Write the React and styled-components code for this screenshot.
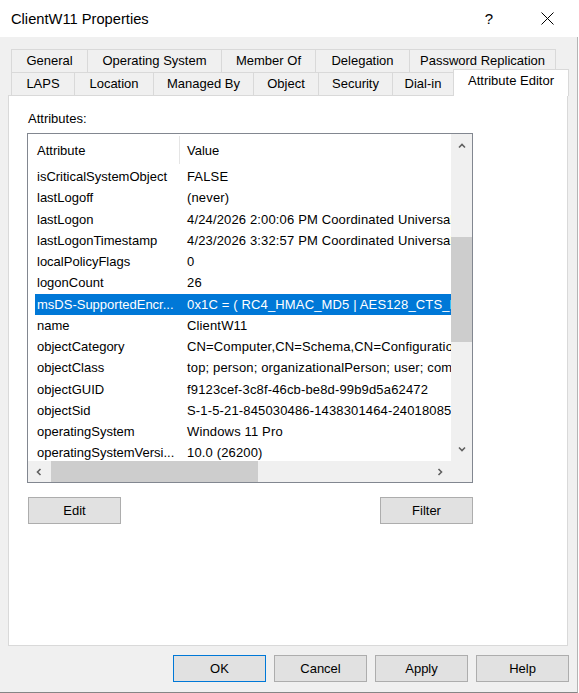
import React from "react";
import styled, { createGlobalStyle } from "styled-components";

const GlobalStyle = createGlobalStyle`
  html, body {
    margin: 0;
    padding: 0;
    background: #fff;
  }
  body {
    font-family: "Liberation Sans", Arial, sans-serif;
    color: #000;
  }
`;

const Window = styled.div`
  width: 579px;
  height: 693px;
  display: flex;
  flex-direction: column;
  background: #fff;
  overflow: hidden;
`;

const TitleBar = styled.div`
  flex: none;
  height: 37px;
  display: flex;
  align-items: center;
  padding-left: 11px;
  padding-right: 9px;
`;

const Title = styled.div`
  flex: 1;
  font-size: 14.7px;
`;

const TitleButton = styled.div`
  width: 46px;
  height: 37px;
  display: flex;
  align-items: center;
  justify-content: center;
  font-size: 15px;
  margin-left: ${(p) => p.$gap || 0}px;
`;

const Body = styled.div`
  flex: 1;
  box-sizing: border-box;
  width: 578px;
  background: #f0f0f0;
  border-right: 1px solid #b4b4b4;
  border-bottom: 1px solid #858585;
  padding: 12px 0 0 8px;
`;

const TabStrip = styled.div`
  padding-left: 3px;
`;

const TabRow = styled.div`
  display: flex;
  height: 23px;
`;

const Tab = styled.div`
  flex: none;
  box-sizing: border-box;
  width: ${(p) => p.$w}px;
  height: ${(p) => (p.$selected ? 27 : 23)}px;
  margin-top: ${(p) => (p.$selected ? -3 : 0)}px;
  margin-left: -1px;
  border: 1px solid #d9d9d9;
  border-bottom: none;
  background: ${(p) => (p.$selected ? "#fff" : "#f0f0f0")};
  font-size: 13px;
  line-height: 22px;
  text-align: center;
  white-space: nowrap;
  z-index: ${(p) => (p.$selected ? 1 : 0)};

  &:first-child {
    margin-left: 0;
  }
`;

const Panel = styled.div`
  box-sizing: border-box;
  width: 560px;
  height: 551px;
  background: #fff;
  border: 1px solid #d9d9d9;
  padding: 15px 0 0 18px;
`;

const Label = styled.div`
  font-size: 13px;
  line-height: 16px;
  padding-left: 1px;
  margin-bottom: 6px;
`;

const ListBox = styled.div`
  box-sizing: border-box;
  width: 446px;
  height: 350px;
  border: 1px solid #828790;
  display: flex;
  flex-direction: column;
`;

const ListMain = styled.div`
  display: flex;
  height: 327px;
`;

const Viewport = styled.div`
  flex: 1;
  overflow: hidden;
  font-size: 13px;
`;

const Header = styled.div`
  display: flex;
  align-items: center;
  height: 32px;
`;

const HeaderCell = styled.div`
  box-sizing: border-box;
  height: 28px;
  display: flex;
  align-items: center;
  white-space: nowrap;
  ${(p) =>
    p.$first
      ? "width: 152px; padding-left: 9px; border-right: 1px solid #e5e5e5;"
      : "padding-left: 7px;"}
`;

const Row = styled.div`
  display: flex;
  margin-left: 7px;
  height: 21.25px;
  line-height: 21.25px;
  white-space: nowrap;
  background: ${(p) => (p.$selected ? "#0078d7" : "transparent")};
  color: ${(p) => (p.$selected ? "#fff" : "#000")};
`;

const NameCell = styled.div`
  flex: none;
  box-sizing: border-box;
  width: 152px;
  padding-left: 2px;
  overflow: hidden;
`;

const ValueCell = styled.div`
  flex: none;
  letter-spacing: 0.15px;
`;

const VScroll = styled.div`
  flex: none;
  width: 21px;
  background: #f0f0f0;
  display: flex;
  flex-direction: column;
`;

const ArrowBox = styled.div`
  flex: none;
  width: ${(p) => p.$w}px;
  height: ${(p) => p.$h}px;
  display: flex;
  align-items: center;
  justify-content: center;
`;

const VTrack = styled.div`
  flex: 1;
`;

const Thumb = styled.div`
  background: #cdcdcd;
`;

const VThumb = styled(Thumb)`
  margin-top: 79px;
  height: 105px;
`;

const HScrollRow = styled.div`
  display: flex;
  height: 21px;
  background: #f0f0f0;
`;

const HTrack = styled.div`
  flex: 1;
  display: flex;
`;

const HThumb = styled(Thumb)`
  margin-left: 1px;
  width: 207px;
  height: 100%;
`;

const Corner = styled.div`
  flex: none;
  width: 21px;
`;

const ButtonRow = styled.div`
  width: 446px;
  box-sizing: border-box;
  display: flex;
  justify-content: space-between;
  padding-left: 1px;
  margin-top: 14px;
`;

const Button = styled.div`
  box-sizing: border-box;
  width: 93px;
  height: 27px;
  background: #e1e1e1;
  border: 1px solid ${(p) => (p.$default ? "#0078d7" : "#adadad")};
  font-size: 13px;
  line-height: 25px;
  text-align: center;
`;

const DialogButtons = styled.div`
  display: flex;
  justify-content: flex-end;
  gap: 8px;
  margin-top: 9px;
  padding-right: 8px;
`;

const topTabs = [
  ["General", 77],
  ["Operating System", 135],
  ["Member Of", 95],
  ["Delegation", 95],
  ["Password Replication", 147],
];

const bottomTabs = [
  ["LAPS", 64],
  ["Location", 80],
  ["Managed By", 101],
  ["Object", 66],
  ["Security", 75],
  ["Dial-in", 62],
  ["Attribute Editor", 116, true],
];

const rows = [
  ["isCriticalSystemObject", "FALSE"],
  ["lastLogoff", "(never)"],
  ["lastLogon", "4/24/2026 2:00:06 PM Coordinated Universal Time"],
  ["lastLogonTimestamp", "4/23/2026 3:32:57 PM Coordinated Universal Time"],
  ["localPolicyFlags", "0"],
  ["logonCount", "26"],
  ["msDS-SupportedEncr...", "0x1C = ( RC4_HMAC_MD5 | AES128_CTS_HMAC_SHA1_96 | AES256_CTS_HMAC_SHA1_96 )", true],
  ["name", "ClientW11"],
  ["objectCategory", "CN=Computer,CN=Schema,CN=Configuration,DC=corp,DC=local"],
  ["objectClass", "top; person; organizationalPerson; user; computer"],
  ["objectGUID", "f9123cef-3c8f-46cb-be8d-99b9d5a62472"],
  ["objectSid", "S-1-5-21-845030486-1438301464-2401808500-1104"],
  ["operatingSystem", "Windows 11 Pro"],
  ["operatingSystemVersi...", "10.0 (26200)"],
];

const chevrons = {
  up: "1,4.5 4,1.5 7,4.5",
  down: "1,1.5 4,4.5 7,1.5",
  left: "4.5,1 1.5,4 4.5,7",
  right: "1.5,1 4.5,4 1.5,7",
};

function Chevron({ dir }) {
  const vertical = dir === "up" || dir === "down";
  return (
    <svg width={vertical ? 8 : 6} height={vertical ? 6 : 8} viewBox={vertical ? "0 0 8 6" : "0 0 6 8"}>
      <polyline points={chevrons[dir]} fill="none" stroke="#606060" strokeWidth="1.6" />
    </svg>
  );
}

function CloseIcon() {
  return (
    <svg width="13" height="13" viewBox="0 0 13 13">
      <path d="M0.5 0.5 L12.5 12.5 M12.5 0.5 L0.5 12.5" stroke="#000" strokeWidth="1" fill="none" />
    </svg>
  );
}

export default function App() {
  return (
    <>
      <GlobalStyle />
      <Window>
        <TitleBar>
          <Title>ClientW11 Properties</Title>
          <TitleButton>?</TitleButton>
          <TitleButton $gap={12}>
            <CloseIcon />
          </TitleButton>
        </TitleBar>
        <Body>
          <TabStrip>
            <TabRow>
              {topTabs.map(([label, w]) => (
                <Tab key={label} $w={w}>
                  {label}
                </Tab>
              ))}
            </TabRow>
            <TabRow>
              {bottomTabs.map(([label, w, selected]) => (
                <Tab key={label} $w={w} $selected={selected}>
                  {label}
                </Tab>
              ))}
            </TabRow>
          </TabStrip>
          <Panel>
            <Label>Attributes:</Label>
            <ListBox>
              <ListMain>
                <Viewport>
                  <Header>
                    <HeaderCell $first>Attribute</HeaderCell>
                    <HeaderCell>Value</HeaderCell>
                  </Header>
                  {rows.map(([name, value, selected]) => (
                    <Row key={name} $selected={selected}>
                      <NameCell>{name}</NameCell>
                      <ValueCell>{value}</ValueCell>
                    </Row>
                  ))}
                </Viewport>
                <VScroll>
                  <ArrowBox $w={21} $h={24}>
                    <Chevron dir="up" />
                  </ArrowBox>
                  <VTrack>
                    <VThumb />
                  </VTrack>
                  <ArrowBox $w={21} $h={24}>
                    <Chevron dir="down" />
                  </ArrowBox>
                </VScroll>
              </ListMain>
              <HScrollRow>
                <ArrowBox $w={22} $h={21}>
                  <Chevron dir="left" />
                </ArrowBox>
                <HTrack>
                  <HThumb />
                </HTrack>
                <ArrowBox $w={22} $h={21}>
                  <Chevron dir="right" />
                </ArrowBox>
                <Corner />
              </HScrollRow>
            </ListBox>
            <ButtonRow>
              <Button>Edit</Button>
              <Button>Filter</Button>
            </ButtonRow>
          </Panel>
          <DialogButtons>
            <Button $default>OK</Button>
            <Button>Cancel</Button>
            <Button>Apply</Button>
            <Button>Help</Button>
          </DialogButtons>
        </Body>
      </Window>
    </>
  );
}
